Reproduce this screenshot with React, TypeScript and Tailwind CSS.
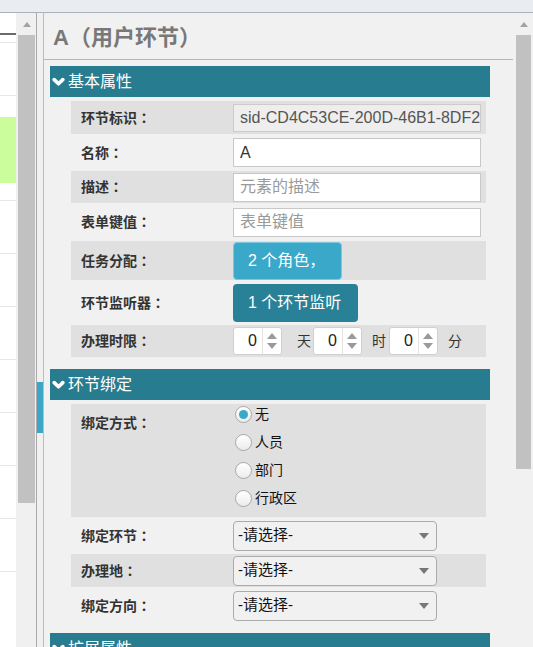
import React from "react";

const leftRows = [0, 1, 2, 3, 4, 5, 6, 7];

const Chevron = () => (
  <svg width="13" height="10" viewBox="0 0 13 10">
    <polyline
      points="2.2,2.6 6.5,6.8 10.8,2.6"
      fill="none"
      stroke="#fff"
      strokeWidth="3.6"
      strokeLinecap="round"
      strokeLinejoin="round"
    />
  </svg>
);

const SectionHeader = ({ title }: { title: string }) => (
  <div className="ml-[6px] w-[440px] h-[31px] shrink-0 bg-[#277c90] flex items-center pl-[2px] gap-[3px] text-white text-[16px]">
    <Chevron />
    <span>{title}</span>
  </div>
);

const Row = ({
  label,
  grey,
  h,
  children,
  top,
}: {
  label: string;
  grey?: boolean;
  h: string;
  children?: React.ReactNode;
  top?: boolean;
}) => (
  <div
    className={`ml-[27px] w-[415px] shrink-0 flex ${h} ${top ? "items-start" : "items-center"} ${
      grey ? "bg-[#e0e0e0]" : ""
    }`}
  >
    <div
      className={`w-[162px] shrink-0 pl-[10px] text-[14px] font-bold text-[#333] ${
        top ? "pt-[8px]" : ""
      }`}
    >
      {label}
      <span className="font-['Noto_Sans_CJK_TC',sans-serif]">：</span>
    </div>
    {children}
  </div>
);

const Spinner = () => (
  <div className="flex w-[49px] h-[28px] bg-white border border-[#d0d0d0] rounded-[3px] shrink-0">
    <div className="w-[28px] flex items-center justify-end pr-[5px] text-[16px] text-[#222]">0</div>
    <div className="flex-1 border-l border-[#e2e2e2] flex flex-col items-center justify-between py-[5px]">
      <span className="w-0 h-0 border-x-[5px] border-x-transparent border-b-[6px] border-b-[#9a9a9a]" />
      <span className="w-0 h-0 border-x-[5px] border-x-transparent border-t-[6px] border-t-[#9a9a9a]" />
    </div>
  </div>
);

const Radio = ({ label, checked }: { label: string; checked?: boolean }) => (
  <div className="h-[20px] flex items-center gap-[3px] text-[14px] text-[#111]">
    <span className="w-[17px] h-[17px] rounded-full border border-[#a8a8a8] bg-gradient-to-b from-white to-[#ececec] flex items-center justify-center">
      {checked && <span className="w-[9px] h-[9px] rounded-full bg-[#3aa8c8]" />}
    </span>
    <span>{label}</span>
  </div>
);

const Select = () => (
  <div className="w-[204px] h-[30px] border border-[#ababab] rounded-[4px] bg-[#f1f1f1] flex items-center justify-between pl-[4px] pr-[7px] text-[15px] text-[#111]">
    <span>-请选择-</span>
    <span className="w-0 h-0 border-x-[5px] border-x-transparent border-t-[6px] border-t-[#777]" />
  </div>
);

export default function App() {
  return (
    <div className="w-[533px] h-[647px] overflow-hidden bg-[#f1f1f1] flex flex-col font-['Liberation_Sans','Noto_Sans_CJK_SC',sans-serif]">
      {/* top bar */}
      <div className="h-[13px] shrink-0 bg-[#e9edf1] border-b border-[#aab3bc]" />

      <div className="flex flex-1 min-h-0">
        {/* left list */}
        <div className="w-[16px] shrink-0 bg-white flex flex-col">
          <div className="h-[20px] shrink-0" />
          <div className="h-[2px] shrink-0 bg-[#6a6a6a]" />
          <div className="h-[7px] shrink-0" />
          <div className="h-[53px] shrink-0 border-t border-[#e6e6e6]" />
          <div className="h-[22px] shrink-0 border-t border-[#e6e6e6]" />
          <div className="h-[66px] shrink-0 bg-[#ccfd9c]" />
          <div className="h-[17px] shrink-0" />
          {leftRows.map((r) => (
            <div key={r} className="h-[53px] shrink-0 border-t border-[#e6e6e6]" />
          ))}
        </div>

        {/* left scrollbar */}
        <div className="w-[19px] shrink-0 bg-[#f0f0f0] flex flex-col pl-[2px]">
          <div className="h-[22px] shrink-0 flex items-center justify-center">
            <span className="w-0 h-0 border-x-[4px] border-x-transparent border-b-[5px] border-b-[#a3a3a3]" />
          </div>
          <div className="h-[468px] shrink-0 bg-[#c1c1c1]" />
        </div>

        {/* splitter */}
        <div className="w-[1px] shrink-0 bg-[#f0f0f0]" />
        <div className="w-[1px] shrink-0 bg-[#a9a9a9]" />
        <div className="w-[6px] shrink-0 bg-[#f0f0f0] flex flex-col">
          <div className="h-[369px] shrink-0" />
          <div className="h-[51px] shrink-0 bg-[#3aa7c7]" />
        </div>

        {/* right panel */}
        <div className="flex-1 flex border-l border-[#bdbdbd] bg-[#f1f1f1]">
          <div className="w-[471px] shrink-0 flex flex-col overflow-hidden">
            <div className="w-[469px] h-[47px] shrink-0 border-b border-[#b3b7bb] flex items-center pl-[9px] pt-[3px] text-[22px] font-bold text-[#787878]">
              A（用户环节）
            </div>

            <div className="h-[6px] shrink-0" />
            <SectionHeader title="基本属性" />
            <div className="h-[4px] shrink-0" />

            <Row label="环节标识" grey h="h-[33px]">
              <div className="w-[248px] h-[28px] border border-[#cbcbcb] bg-[#eeeeee] flex items-center pl-[6px] text-[16px] text-[#555] whitespace-nowrap overflow-hidden">
                sid-CD4C53CE-200D-46B1-8DF2
              </div>
            </Row>
            <Row label="名称" h="h-[37px]">
              <div className="w-[248px] h-[29px] border border-[#c8c8c8] bg-white flex items-center pl-[6px] text-[16px] text-[#333]">
                A
              </div>
            </Row>
            <Row label="描述" grey h="h-[32px]">
              <div className="w-[248px] h-[29px] border border-[#c8c8c8] bg-white flex items-center pl-[6px] text-[16px] text-[#9a9a9a]">
                元素的描述
              </div>
            </Row>
            <Row label="表单键值" h="h-[38px]">
              <div className="w-[248px] h-[29px] border border-[#c8c8c8] bg-white flex items-center pl-[6px] text-[16px] text-[#9a9a9a]">
                表单键值
              </div>
            </Row>
            <Row label="任务分配" grey h="h-[39px]">
              <div className="w-[109px] h-[38px] rounded-[4px] bg-[#3aa8c8] border border-[#7cc8de] flex items-center pl-[14px] text-[16px] text-white">
                2 个角色，
              </div>
            </Row>
            <Row label="环节监听器" h="h-[45px]">
              <div className="w-[125px] h-[38px] rounded-[4px] bg-[#298198] flex items-center pl-[15px] text-[16px] text-white">
                1 个环节监听
              </div>
            </Row>
            <Row label="办理时限" grey h="h-[32px]">
              <div className="flex items-center text-[14px] text-[#333]">
                <Spinner />
                <span className="ml-[15px] mr-[2px]">天</span>
                <Spinner />
                <span className="ml-[10px] mr-[3px]">时</span>
                <Spinner />
                <span className="ml-[10px]">分</span>
              </div>
            </Row>

            <div className="h-[12px] shrink-0" />
            <SectionHeader title="环节绑定" />
            <div className="h-[4px] shrink-0" />

            <Row label="绑定方式" grey h="h-[113px]" top>
              <div className="flex flex-col gap-[8px] pl-[2px]">
                <Radio label="无" checked />
                <Radio label="人员" />
                <Radio label="部门" />
                <Radio label="行政区" />
              </div>
            </Row>
            <Row label="绑定环节" h="h-[37px]">
              <Select />
            </Row>
            <Row label="办理地" grey h="h-[33px]">
              <Select />
            </Row>
            <Row label="绑定方向" h="h-[37px]">
              <Select />
            </Row>

            <div className="h-[9px] shrink-0" />
            <SectionHeader title="扩展属性" />
          </div>

          {/* right scrollbar */}
          <div className="w-[17px] shrink-0 flex flex-col">
            <div className="h-[22px] shrink-0 flex items-center justify-center">
              <span className="w-0 h-0 border-x-[4px] border-x-transparent border-b-[5px] border-b-[#a3a3a3]" />
            </div>
            <div className="h-[434px] shrink-0 mx-[1px] bg-[#c1c1c1]" />
          </div>
        </div>
      </div>
    </div>
  );
}
